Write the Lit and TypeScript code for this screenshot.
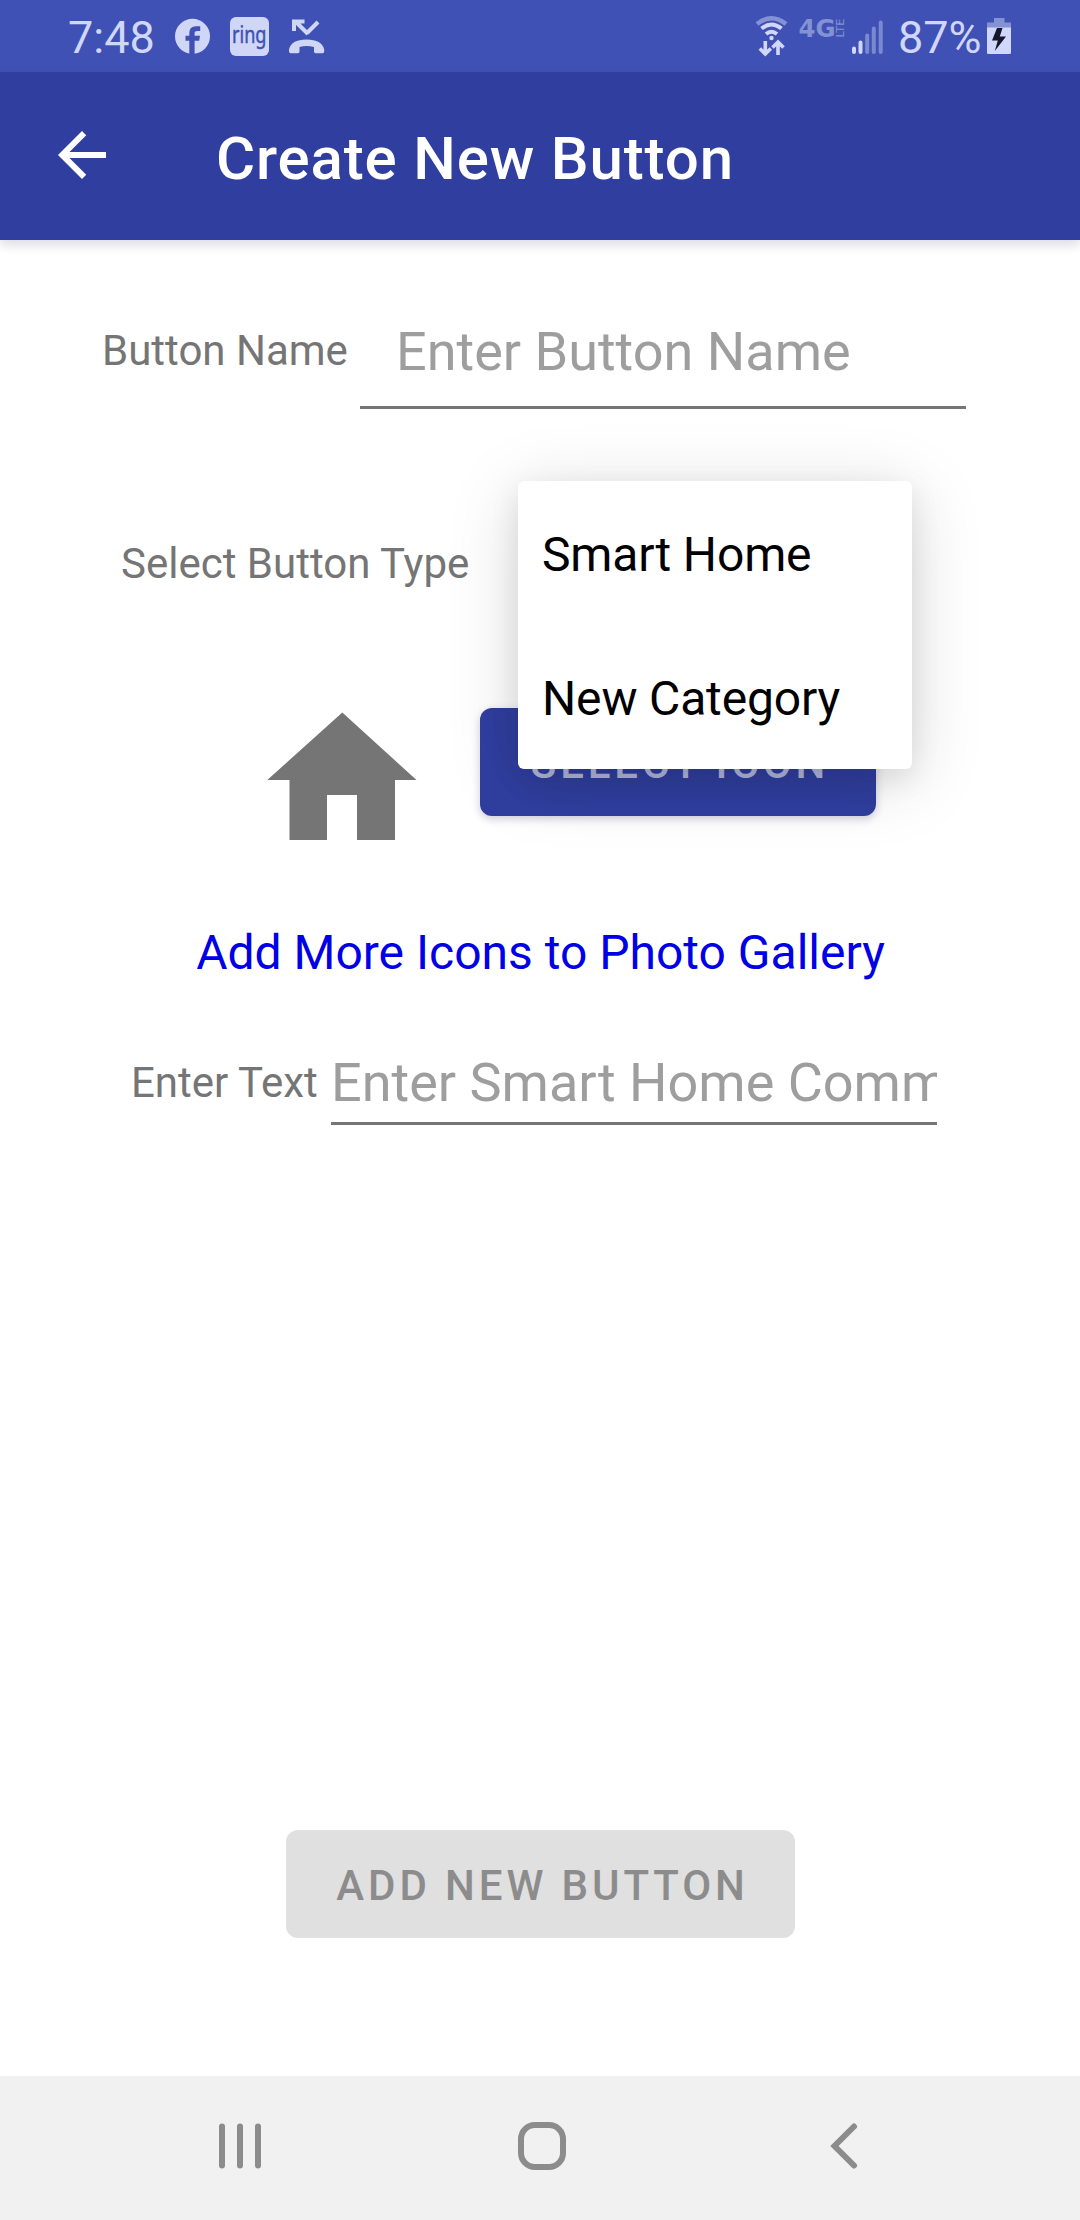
import { LitElement, html, css } from "lit";
import { customElement, property } from "lit/decorators.js";

@customElement("status-bar")
class StatusBar extends LitElement {
  static styles = css`
    :host {
      display: flex;
      justify-content: space-between;
      height: 72px;
      background: #3f51b5;
      color: #d0d7fa;
      font-size: 45px;
      line-height: 75px;
    }
    .side {
      display: flex;
      align-items: flex-start;
    }
    .left {
      padding-left: 68px;
    }
    .right {
      padding-right: 68px;
    }
    .icons {
      display: block;
      height: 72px;
    }
    .clock {
      width: 90px;
    }
    .percent {
      width: 86px;
      white-space: nowrap;
    }
  `;
  render() {
    return html`
      <div class="side left">
        <span class="clock">7:48</span>
        <svg class="icons" width="180" height="72" viewBox="158 0 180 72">
          <circle cx="192.500" cy="36.300" r="17.500" fill="#d0d7f6" />
          <path
            d="M189.300 54.500V40.700H185.500V35.800H189.300V33Q189.300 26.200 196 26.200H200.200V31H197.200Q194.600 31 194.600 33.400V35.800H200L199.200 40.700H194.600V54.500Z"
            fill="#3f51b5"
          />
          <rect x="230" y="17" width="39" height="39" rx="6" fill="#d0d7f6" />
          <text
            x="232"
            y="43"
            font-family="'Noto Sans', sans-serif"
            font-size="23"
            textLength="34.500"
            lengthAdjust="spacingAndGlyphs"
            fill="#3f51b5"
            stroke="#3f51b5"
            stroke-width="0.500"
          >ring</text>
          <path d="M307 33L318 22" fill="none" stroke="#d0d7f6" stroke-width="4" />
          <path d="M308 34L295 21M294 31V21.500H304.500" fill="none" stroke="#d0d7f6" stroke-width="4" />
          <path
            d="M289 49.500Q291 39.500 306.500 39.500T324.200 49.500V51.500Q324.200 53.200 322.500 53.200H315.500Q314 53.200 314 51.500V47Q306.500 44.800 299.500 47V51.500Q299.500 53.200 298 53.200H290.700Q289 53.200 289 51.500Z"
            fill="#d0d7f6"
          />
        </svg>
      </div>
      <div class="side right">
        <svg class="icons" width="148" height="72" viewBox="750 0 148 72">
          <g fill="none">
            <path d="M757 24Q771.500 12.500 786 24" stroke="#8491d3" stroke-width="4.500" />
            <path d="M761.500 28.500Q771.500 20.500 781.500 28.500" stroke="#d0d7fa" stroke-width="4" />
            <path d="M766 34Q771.500 29.500 777 34" stroke="#d0d7fa" stroke-width="4" />
          </g>
          <circle cx="771.500" cy="38" r="2.200" fill="#d0d7fa" />
          <path
            d="M765.300 41V53M759.800 48.500L765.300 54L770.800 48.500M778 55V43M772.500 47.500L778 42L783.500 47.500"
            fill="none"
            stroke="#d0d7fa"
            stroke-width="3.600"
          />
          <text
            x="798.500"
            y="37"
            font-family="'DejaVu Sans', sans-serif"
            font-weight="bold"
            font-size="25"
            textLength="37"
            lengthAdjust="spacingAndGlyphs"
            fill="#8491d3"
          >4G</text>
          <text
            transform="translate(844 37.500) rotate(-90)"
            font-family="'DejaVu Sans', sans-serif"
            font-size="10"
            textLength="19"
            lengthAdjust="spacingAndGlyphs"
            fill="#8491d3"
          >LTE</text>
          <g stroke-width="4" stroke-linecap="round">
            <path d="M854 48.500V52M860.500 42.500V52" stroke="#d0d7fa" />
            <path d="M867.200 35.500V52M873.800 28.500V52M880.700 22.500V52" stroke="#7b89cf" />
          </g>
        </svg>
        <span class="percent">87%</span>
        <svg class="icons" width="28" height="72" viewBox="984 0 28 72">
          <path d="M987 28V22.500H994V18H1004.500V22.500H1011V28Z" fill="#8491d3" />
          <path d="M987 27.500H1011V52.500Q1011 54 1009.500 54H988.500Q987 54 987 52.500Z" fill="#d0d7fa" />
          <path d="M997 28L992 40.500H997.800L994.800 51L1006 36.500H999.800L1002.500 28Z" fill="#17172b" />
        </svg>
      </div>
    `;
  }
}

@customElement("form-field")
class FormField extends LitElement {
  @property() label = "";
  @property() hint = "";
  @property() variant = "";
  static styles = css`
    :host {
      display: flex;
    }
    .row {
      display: flex;
    }
    .label {
      flex: none;
      font-size: 42px;
      color: #757575;
      white-space: nowrap;
    }
    .input {
      box-sizing: border-box;
      width: 606px;
      border-bottom: 3px solid #757575;
      font-size: 54px;
      color: #9e9e9e;
      white-space: nowrap;
      overflow: hidden;
    }
    .name .label {
      width: 258px;
      line-height: 101px;
    }
    .name .input {
      height: 109px;
      padding-left: 36px;
      line-height: 103px;
    }
    .text .label {
      width: 200px;
      line-height: 80px;
    }
    .text .input {
      height: 82px;
      line-height: 80px;
    }
  `;
  render() {
    return html`<div class="row ${this.variant}">
      <span class="label">${this.label}</span>
      <div class="input">${this.hint}</div>
    </div>`;
  }
}

@customElement("app-root")
class AppRoot extends LitElement {
  static styles = css`
    :host {
      display: flex;
      flex-direction: column;
      width: 1080px;
      height: 2220px;
      overflow: hidden;
      background: #fff;
      font-family: Roboto, sans-serif;
    }
    .appbar {
      display: flex;
      align-items: center;
      height: 168px;
      box-sizing: border-box;
      padding: 0 46px;
      gap: 98px;
      background: #303f9f;
      color: #fff;
      box-shadow: 0 5px 10px rgba(40, 40, 90, 0.16);
    }
    .back {
      display: block;
      margin-top: -2px;
    }
    .title {
      font-size: 60px;
      font-weight: 500;
      line-height: 80px;
      letter-spacing: 0.85px;
      margin-top: 5px;
      white-space: nowrap;
    }
    .content {
      flex: 1;
      display: flex;
      flex-direction: column;
    }
    .name-field {
      margin: 60px 0 0 102px;
    }
    .type-row {
      position: relative;
      margin: 125px 0 0 121px;
      height: 60px;
      line-height: 60px;
      font-size: 42px;
      color: #757575;
    }
    .menu {
      position: absolute;
      z-index: 2;
      left: 397px;
      top: -53px;
      width: 394px;
      height: 288px;
      border-radius: 6px;
      background: #fff;
      box-shadow: 0 12px 72px rgba(0, 0, 0, 0.15), 0 10px 30px rgba(0, 0, 0, 0.09);
      color: #000;
      font-size: 48px;
      letter-spacing: -0.15px;
    }
    .option {
      height: 144px;
      line-height: 147px;
      padding-left: 24px;
      white-space: nowrap;
    }
    .icon-row {
      display: flex;
      margin: 114px 0 0 267px;
      height: 132px;
    }
    .house {
      display: block;
      width: 150px;
      height: 132px;
      margin-right: 63px;
    }
    .button {
      box-sizing: border-box;
      height: 108px;
      line-height: 112px;
      border-radius: 12px;
      font-size: 42px;
      font-weight: 500;
      letter-spacing: 3.9px;
      white-space: nowrap;
      text-align: center;
    }
    .select {
      width: 396px;
      padding-left: 4px;
      background: #303f9f;
      color: #b3b8de;
      box-shadow: 0 3px 8px rgba(30, 30, 80, 0.22);
    }
    .link {
      margin-top: 83px;
      padding-left: 1px;
      text-align: center;
      font-size: 48px;
      line-height: 60px;
      color: #0000e6;
    }
    .text-field {
      margin: 60px 0 0 131px;
    }
    .add {
      align-self: center;
      width: 509px;
      margin: auto 0 138px 1px;
      padding-left: 4px;
      background: #e0e0e0;
      color: #8c8c8c;
    }
    .nav {
      height: 144px;
      background: #f1f1f1;
    }
    .nav-icons {
      display: block;
    }
  `;
  render() {
    return html`
      <status-bar></status-bar>
      <header class="appbar">
        <svg class="back" width="72" height="72" viewBox="0 0 24 24" fill="#fff">
          <path d="M20 11H7.830l5.590-5.590L12 4l-8 8 8 8 1.410-1.410L7.830 13H20v-2z" />
        </svg>
        <div class="title">Create New Button</div>
      </header>
      <main class="content">
        <form-field class="name-field" variant="name" label="Button Name" hint="Enter Button Name"></form-field>
        <div class="type-row">
          Select Button Type
          <div class="menu">
            <div class="option">Smart Home</div>
            <div class="option">New Category</div>
          </div>
        </div>
        <div class="icon-row">
          <svg class="house" viewBox="267 708 150 132">
            <path d="M342.300 712.500L416.500 780H395V840H357V795H327V840H289.500V780H267.300Z" fill="#757575" />
          </svg>
          <div class="button select">SELECT ICON</div>
        </div>
        <div class="link">Add More Icons to Photo Gallery</div>
        <form-field class="text-field" variant="text" label="Enter Text" hint="Enter Smart Home Command"></form-field>
        <div class="button add">ADD NEW BUTTON</div>
      </main>
      <nav class="nav">
        <svg class="nav-icons" width="1080" height="144" viewBox="0 2076 1080 144" fill="none" stroke="#8c8c8c" stroke-width="6">
          <path d="M222 2126.500V2165.500M240 2126.500V2165.500M258 2126.500V2165.500" stroke-linecap="round" />
          <rect x="521" y="2125" width="42" height="42" rx="14" />
          <path d="M854 2126.500L834.500 2146L854 2165.500" stroke-linecap="round" />
        </svg>
      </nav>
    `;
  }
}
